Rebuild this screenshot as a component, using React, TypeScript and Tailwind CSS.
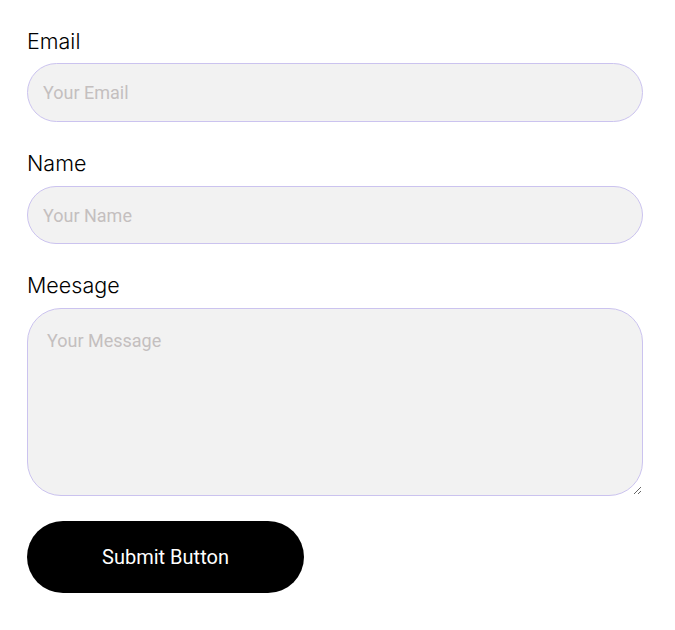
export default function App() {
  return (
    <div className="min-h-[630px] w-[675px] bg-white px-[27px] pt-[27px] font-['Inter',sans-serif]">
      <form className="flex w-[616px] flex-col" onSubmit={(e) => e.preventDefault()}>
        <label className="text-[21.5px] font-light leading-[28px] text-black">Email</label>
        <input
          type="email"
          placeholder="Your Email"
          className="mt-[8px] h-[59px] w-full rounded-full border border-[#cbc3ef] bg-[#f2f2f2] px-[15px] font-['Roboto',sans-serif] text-[18px] text-black outline-none placeholder:text-[#c4bfbf]"
        />
        <label className="mt-[27px] text-[21.5px] font-light leading-[28px] text-black">Name</label>
        <input
          type="text"
          placeholder="Your Name"
          className="mt-[9px] h-[58px] w-full rounded-full border border-[#cbc3ef] bg-[#f2f2f2] px-[15px] font-['Roboto',sans-serif] text-[18px] text-black outline-none placeholder:text-[#c4bfbf]"
        />
        <label className="mt-[27px] text-[21.5px] font-light leading-[28px] text-black">Meesage</label>
        <textarea
          placeholder="Your Message"
          className="mt-[9px] h-[188px] w-full rounded-[34px] border border-[#cbc3ef] bg-[#f2f2f2] px-[19px] py-[18px] font-['Roboto',sans-serif] text-[18px] text-black outline-none placeholder:text-[#c4bfbf]"
        />
        <button
          type="submit"
          className="mt-[25px] h-[72px] w-[277px] rounded-full bg-black font-['Roboto',sans-serif] text-[20px] font-normal text-white"
        >
          Submit Button
        </button>
      </form>
    </div>
  );
}
